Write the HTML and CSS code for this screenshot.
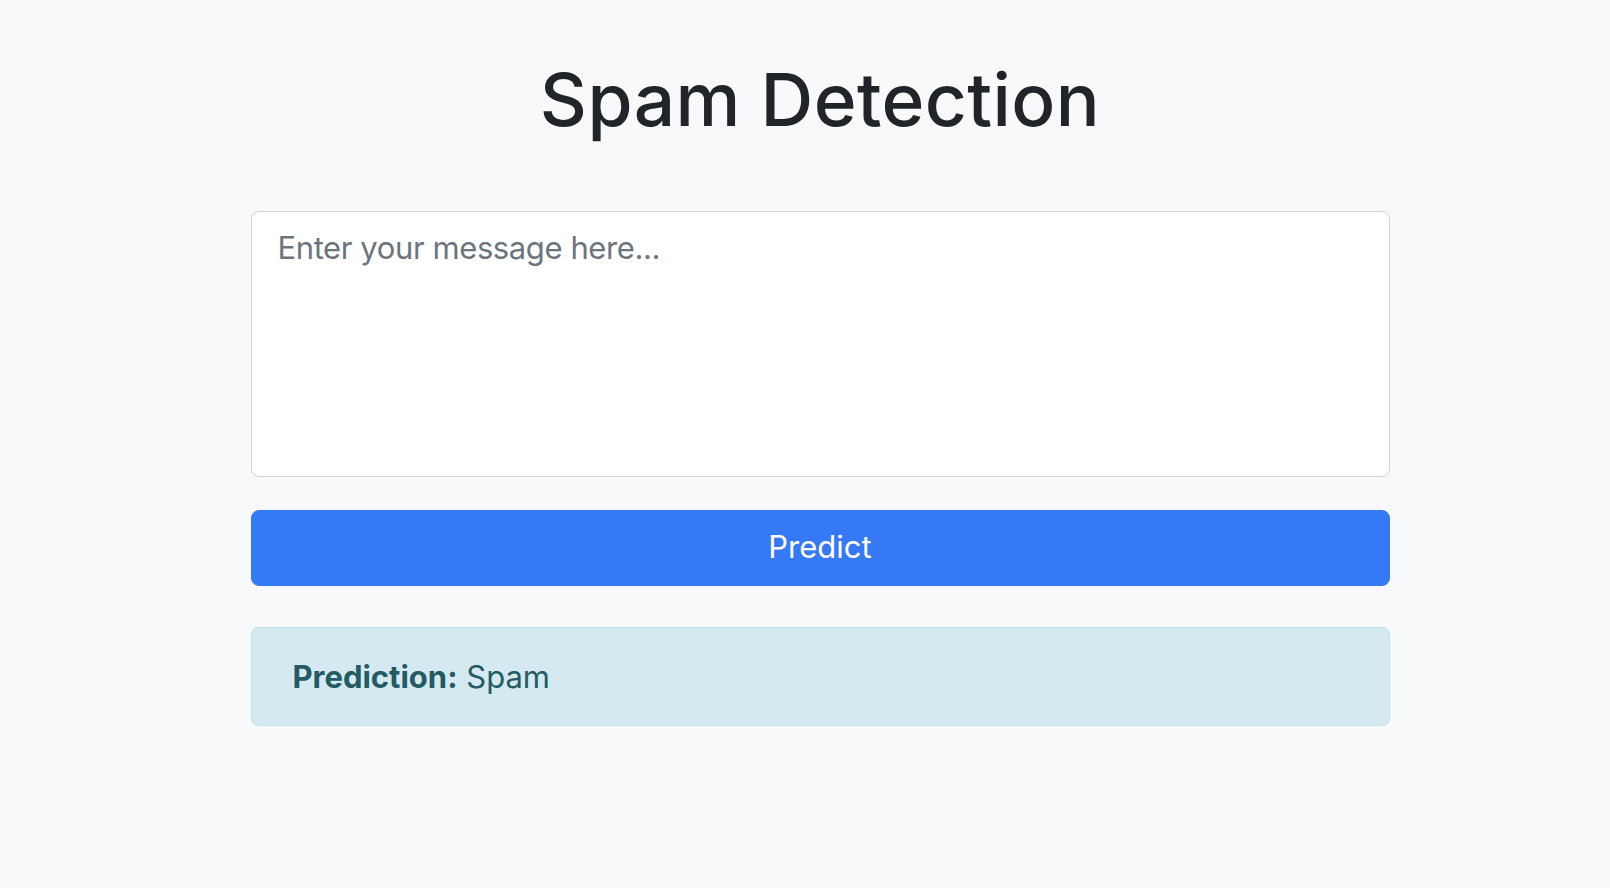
FILE: index.html
```html
<!DOCTYPE html>
<html lang="en">
<head>
<meta charset="utf-8">
<title>Spam Detection</title>
<link rel="stylesheet" href="styles.css">
</head>
<body>
<div class="page">
  <main class="container">
    <h1 class="title">Spam Detection</h1>
    <form class="form">
      <textarea class="message" placeholder="Enter your message here..."></textarea>
      <button type="button" class="predict">Predict</button>
    </form>
    <div class="alert"><strong>Prediction:</strong> Spam</div>
  </main>
</div>
</body>
</html>
```

FILE: styles.css
```css
html, body {
  margin: 0;
  padding: 0;
  background: #f8f9fa;
}
body {
  font-family: Inter, "Noto Sans", sans-serif;
  color: #212529;
}
.page {
  padding-left: 30px;
}
.container {
  width: 1139px;
  margin: 0 auto;
  display: flex;
  flex-direction: column;
}
.title {
  margin: 56px 0 67px;
  font-size: 73px;
  font-weight: 500;
  line-height: 1.2;
  text-align: center;
  color: #212529;
  letter-spacing: 0.4px;
}
.form {
  display: flex;
  flex-direction: column;
  gap: 33px;
  margin: 0;
}
.message {
  box-sizing: border-box;
  width: 100%;
  height: 266px;
  padding: 13px 26px;
  font-family: inherit;
  font-size: 31px;
  letter-spacing: -0.4px;
  line-height: 1.5;
  color: #212529;
  background: #fff;
  border: 1px solid #ced4da;
  border-radius: 8px;
  resize: none;
  outline: none;
}
.message::placeholder {
  color: #6c757d;
  opacity: 1;
}
.predict {
  box-sizing: border-box;
  width: 100%;
  height: 76px;
  font-family: inherit;
  font-size: 31px;
  line-height: 1.5;
  color: #fff;
  background: #3579f6;
  border: 1px solid #3579f6;
  border-radius: 8px;
  cursor: pointer;
}
.alert {
  margin-top: 41px;
  padding: 26px 41px;
  font-size: 31px;
  line-height: 45px;
  color: #235a64;
  background: #d5eaf0;
  border: 1px solid #c2e2e9;
  border-radius: 7px;
}
.alert strong {
  font-weight: 700;
}
```
